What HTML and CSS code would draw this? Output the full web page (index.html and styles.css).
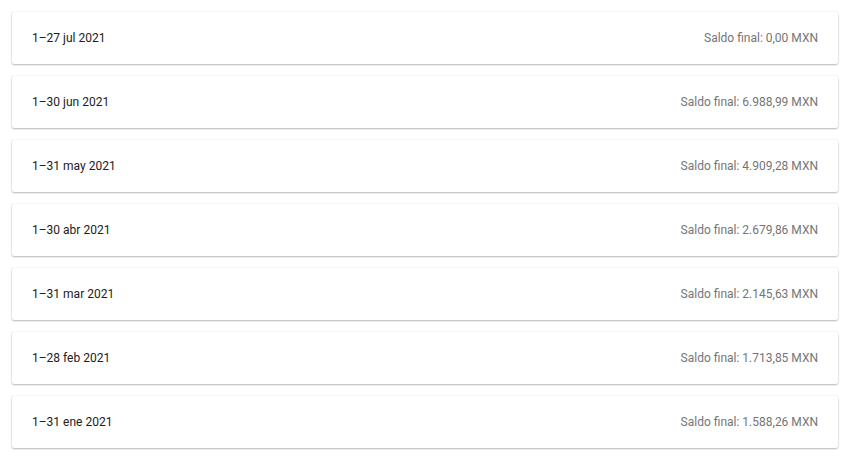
FILE: index.html
```html
<!DOCTYPE html>
<html lang="es">
<head>
<meta charset="utf-8">
<link rel="stylesheet" href="styles.css">
</head>
<body>
<div class="list">
  <div class="card"><span class="period">1–27 jul 2021</span><span class="balance">Saldo final: 0,00 MXN</span></div>
  <div class="card"><span class="period">1–30 jun 2021</span><span class="balance">Saldo final: 6.988,99 MXN</span></div>
  <div class="card"><span class="period">1–31 may 2021</span><span class="balance">Saldo final: 4.909,28 MXN</span></div>
  <div class="card"><span class="period">1–30 abr 2021</span><span class="balance">Saldo final: 2.679,86 MXN</span></div>
  <div class="card"><span class="period">1–31 mar 2021</span><span class="balance">Saldo final: 2.145,63 MXN</span></div>
  <div class="card"><span class="period">1–28 feb 2021</span><span class="balance">Saldo final: 1.713,85 MXN</span></div>
  <div class="card"><span class="period">1–31 ene 2021</span><span class="balance">Saldo final: 1.588,26 MXN</span></div>
</div>
</body>
</html>
```
FILE: styles.css
```css
html, body {
  margin: 0;
  background: #ffffff;
}
body {
  padding: 12px;
  font-family: Roboto, "Liberation Sans", sans-serif;
  font-size: 12px;
}
.list {
  display: flex;
  flex-direction: column;
  gap: 12px;
}
.card {
  height: 52px;
  box-sizing: border-box;
  padding: 0 20px;
  display: flex;
  align-items: center;
  justify-content: space-between;
  background: #fff;
  border-radius: 2px;
  box-shadow: 0 1px 2px rgba(0,0,0,0.26), 0 0 2px rgba(0,0,0,0.12);
}
.period {
  color: #212121;
}
.balance {
  color: #757575;
}
```
